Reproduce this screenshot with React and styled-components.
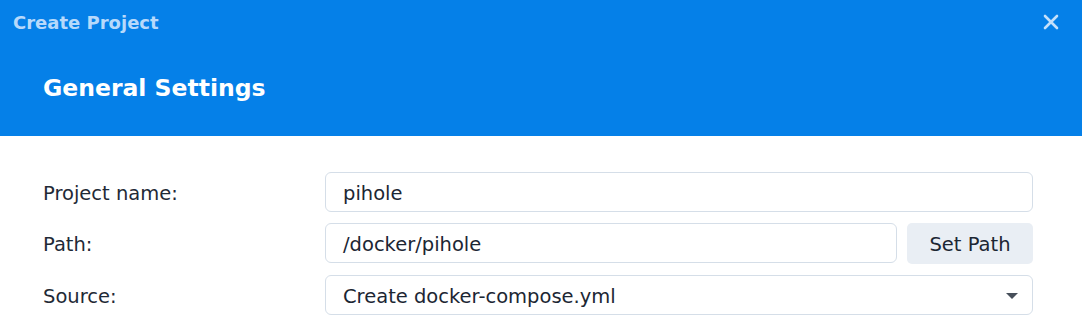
import React from "react";
import styled, { createGlobalStyle } from "styled-components";

const Global = createGlobalStyle`
  html, body { margin: 0; padding: 0; background: #ffffff; }
  body { font-family: "DejaVu Sans", Verdana, sans-serif; }
`;

const Dialog = styled.div`
  width: 1082px;
  height: 322px;
  background: #ffffff;
  overflow: hidden;
`;

const Header = styled.header`
  background: #0580e8;
  height: 136px;
  box-sizing: border-box;
  display: flex;
  flex-direction: column;
`;

const TitleBar = styled.div`
  height: 44px;
  display: flex;
  align-items: center;
  justify-content: space-between;
  padding: 0 22px 0 13px;
`;

const WindowTitle = styled.div`
  color: #b7d9fb;
  font-weight: bold;
  font-size: 18px;
`;

const CloseButton = styled.button`
  border: 0;
  background: transparent;
  padding: 0;
  width: 18px;
  height: 18px;
  display: flex;
  align-items: center;
  justify-content: center;
  cursor: pointer;
`;

const Heading = styled.h1`
  margin: 20px 0 0 0;
  padding: 0 0 0 43px;
  height: 48px;
  display: flex;
  align-items: center;
  color: #ffffff;
  font-size: 23.5px;
  font-weight: bold;
`;

const Form = styled.div`
  display: flex;
  flex-direction: column;
  gap: 11px;
  padding: 36px 49px 0 43px;
`;

const Row = styled.div`
  display: grid;
  grid-template-columns: 282px 1fr;
  align-items: center;
`;

const Label = styled.label`
  font-size: 19.5px;
  color: #1f2a36;
  padding-top: 2px;
`;

const Controls = styled.div`
  display: flex;
  gap: 10px;
`;

const Field = styled.div`
  flex: 1;
  height: 40px;
  box-sizing: border-box;
  border: 1px solid #d5dee8;
  border-radius: 6px;
  display: flex;
  align-items: center;
  justify-content: space-between;
  padding: 2px 17px 0 17px;
  font-size: 19.5px;
  color: #1c2633;
`;

const Button = styled.button`
  width: 126px;
  height: 41px;
  border: 0;
  border-radius: 5px;
  background: #e9eef4;
  font-family: inherit;
  font-size: 19.5px;
  color: #1c2633;
  padding: 2px 0 0 0;
`;

const Caret = styled.span`
  width: 0;
  height: 0;
  border-left: 6px solid transparent;
  border-right: 6px solid transparent;
  border-top: 6px solid #474f5a;
  margin-right: -3px;
`;

export default function App() {
  return (
    <Dialog>
      <Global />
      <Header>
        <TitleBar>
          <WindowTitle>Create Project</WindowTitle>
          <CloseButton aria-label="Close">
            <svg width="16" height="16" viewBox="0 0 16 16">
              <path d="M2 2 L14 14 M14 2 L2 14" stroke="#c4e0fb" strokeWidth="2.6" strokeLinecap="round" />
            </svg>
          </CloseButton>
        </TitleBar>
        <Heading>General Settings</Heading>
      </Header>
      <Form>
        <Row>
          <Label>Project name:</Label>
          <Controls>
            <Field>pihole</Field>
          </Controls>
        </Row>
        <Row>
          <Label>Path:</Label>
          <Controls>
            <Field>/docker/pihole</Field>
            <Button>Set Path</Button>
          </Controls>
        </Row>
        <Row>
          <Label>Source:</Label>
          <Controls>
            <Field>
              <span>Create docker-compose.yml</span>
              <Caret />
            </Field>
          </Controls>
        </Row>
      </Form>
    </Dialog>
  );
}
